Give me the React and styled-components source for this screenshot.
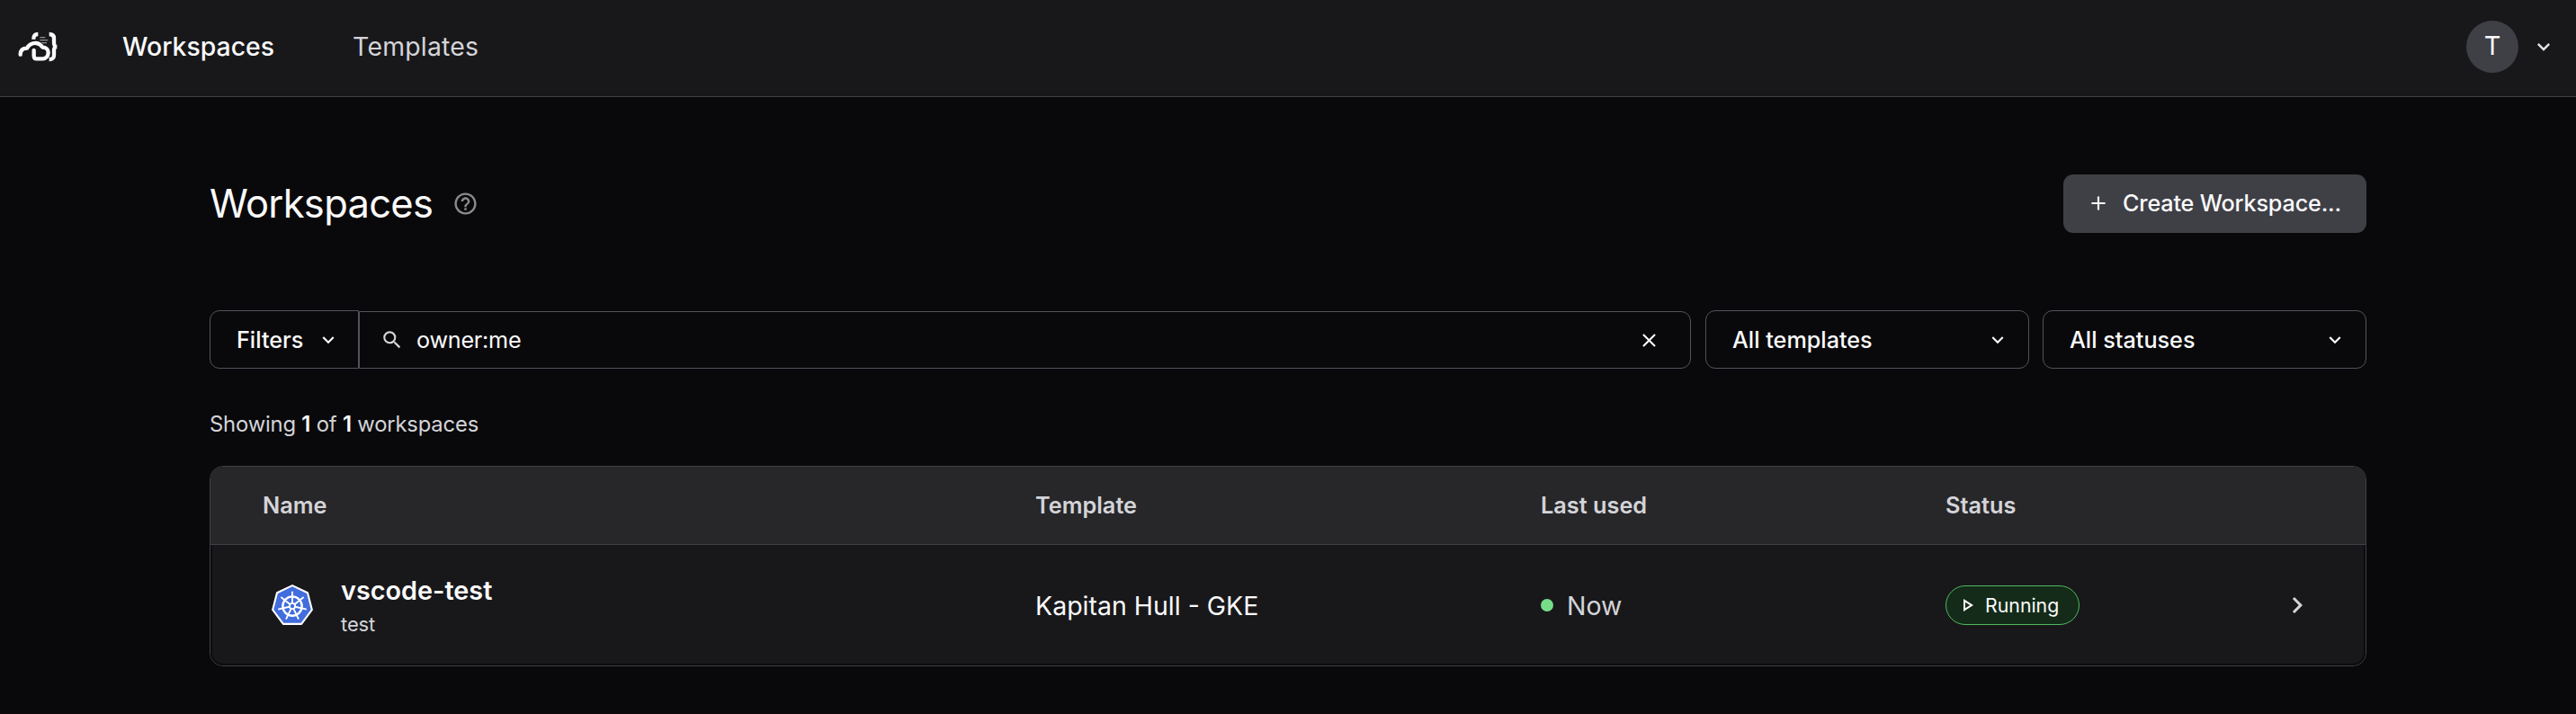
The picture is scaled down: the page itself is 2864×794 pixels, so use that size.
import React from "react";
import styled, { createGlobalStyle } from "styled-components";
import {
  MdKeyboardArrowDown,
  MdKeyboardArrowRight,
  MdHelpOutline,
  MdAdd,
  MdSearch,
  MdClose,
  MdOutlinePlayArrow,
} from "react-icons/md";

const GlobalStyle = createGlobalStyle`
  *, *::before, *::after { box-sizing: border-box; }
  body {
    margin: 0;
    background: #09090b;
    color: #fafafa;
    font-family: Inter, "Liberation Sans", sans-serif;
    -webkit-font-smoothing: antialiased;
  }
  button { font: inherit; color: inherit; }
  svg { display: block; flex: none; }
`;

const Page = styled.div`
  min-height: 794px;
`;

const Navbar = styled.header`
  height: 108px;
  display: flex;
  align-items: center;
  padding: 0 22px 4px 20px;
  background: #18181b;
  border-bottom: 1px solid #3f3f46;
`;

const LogoMark = styled.svg`
  width: 46px;
  height: 36px;
  margin-top: 3px;
`;

const Nav = styled.nav`
  display: flex;
  gap: 87px;
  margin-left: 70px;
  flex: 1;
`;

const NavLink = styled.a`
  font-size: 28.4px;
  line-height: 40px;
  letter-spacing: ${(p) => (p.$active ? "0" : "0.2px")};
  font-weight: ${(p) => (p.$active ? 500 : 400)};
  color: ${(p) => (p.$active ? "#fafafa" : "#d4d4d8")};
`;

const UserMenu = styled.div`
  display: flex;
  align-items: center;
  gap: 14px;
  color: #e4e4e7;
`;

const Avatar = styled.span`
  width: 58px;
  height: 58px;
  border-radius: 50%;
  display: flex;
  align-items: center;
  justify-content: center;
  background: #3f3f46;
  color: #fafafa;
  font-size: 28.8px;
  padding-bottom: 2px;
`;

const Main = styled.main`
  width: 2398px;
  margin: 0 auto;
  padding-top: 86px;
`;

const PageHeader = styled.div`
  height: 65px;
  display: flex;
  align-items: center;
  justify-content: space-between;
`;

const TitleGroup = styled.div`
  display: flex;
  align-items: center;
  gap: 22px;
  color: #8b8b8e;
`;

const Title = styled.h1`
  margin: 0;
  padding-bottom: 2px;
  font-size: 43.5px;
  line-height: 56px;
  letter-spacing: -0.7px;
  font-weight: 400;
  color: #fafafa;
`;

const PrimaryButton = styled.button`
  width: 337px;
  height: 65px;
  display: flex;
  align-items: center;
  gap: 14px;
  padding: 0 0 1px 26px;
  border: 0;
  border-radius: 11px;
  background: #3f3f46;
  font-size: 25.2px;
  letter-spacing: -0.17px;
  font-weight: 500;
  white-space: nowrap;
`;

const FilterBar = styled.div`
  display: flex;
  align-items: flex-end;
  margin-top: 86px;
`;

const OutlinedButton = styled.button`
  width: ${(p) => p.$width};
  height: 65px;
  margin-left: ${(p) => p.$gap || "0"};
  padding: 0 ${(p) => p.$right} 0 29px;
  display: flex;
  align-items: center;
  justify-content: space-between;
  border: 1px solid #52525b;
  border-radius: ${(p) => (p.$joined ? "11px 0 0 11px" : "11px")};
  background: transparent;
  font-size: 25.2px;
  font-weight: 500;
`;

const SearchField = styled.div`
  width: 1481px;
  height: 64px;
  display: flex;
  align-items: center;
  padding: 0 33px 0 23px;
  border: 1px solid #52525b;
  border-radius: 0 11px 11px 0;
  color: #d4d4d8;
`;

const SearchText = styled.span`
  flex: 1;
  margin-left: 14px;
  font-size: 25.2px;
  letter-spacing: -0.25px;
  color: #fafafa;
`;

const Summary = styled.p`
  margin: 46px 0 0;
  height: 32px;
  font-size: 23.8px;
  line-height: 32px;
  letter-spacing: -0.18px;
  color: #d4d4d8;

  strong {
    font-weight: 600;
    color: #fafafa;
  }
`;

const Table = styled.section`
  margin-top: 30px;
  border: 1px solid #3f3f46;
  border-radius: 15px;
  overflow: hidden;
`;

const columns = `
  display: grid;
  grid-template-columns: 859px 562px 450px 1fr;
  align-items: center;
`;

const TableHead = styled.div`
  ${columns}
  height: 87px;
  padding: 0 0 1px 58px;
  background: #27272a;
  border-bottom: 1px solid #3f3f46;
  font-size: 25.3px;
  font-weight: 600;
  color: #d4d4d8;
`;

const TableRow = styled.div`
  ${columns}
  height: 134px;
  padding: 2px 0 0 56px;
  background: #18181b;
  border: 2px solid #0c0c0e;
  border-top: 0;
  border-radius: 0 0 14px 14px;
  font-size: 28.5px;
`;

const NameCell = styled.div`
  display: flex;
  align-items: center;
  padding-left: 9px;
  gap: 30px;
`;

const WorkspaceName = styled.div`
  font-size: 28.8px;
  line-height: 42px;
  font-weight: 600;
`;

const Owner = styled.div`
  font-size: 22px;
  line-height: 32px;
  letter-spacing: -0.1px;
  color: #d4d4d8;
`;

const LastUsed = styled.div`
  display: flex;
  align-items: center;
  gap: 15px;
  color: #d4d4d8;
`;

const Dot = styled.span`
  width: 14px;
  height: 14px;
  border-radius: 50%;
  background: #77dd88;
`;

const StatusCell = styled.div`
  display: flex;
  align-items: center;
  justify-content: space-between;
  padding-right: 56px;
  color: #d4d4d8;
`;

const StatusPill = styled.span`
  width: 149px;
  height: 44px;
  display: flex;
  align-items: center;
  gap: 8px;
  padding-left: 11px;
  border: 1px solid #4fb85e;
  border-radius: 22px;
  background: #142b19;
  color: #fafafa;
  font-size: 21.3px;
`;

function Logo() {
  return (
    <LogoMark viewBox="30 33 138 108" fill="none" strokeWidth="13">
      <g stroke="#fafafa">
        <path d="M97 42c-10 0-15 4-15 17" />
        <path
          d="M38 110c0-14 7-21 22-21 8-14 19-18 31-17 11 1 16 6 21 14 12 0 19 7 19 17 0 11-7 21-18 21H92c-7 0-9-4-9-10V96"
          strokeLinecap="round"
          strokeLinejoin="round"
        />
        <path d="M134 42c12 0 16 5 16 14v14c0 9 2 14 10 14-8 0-10 5-10 14v14c0 10-4 14-16 14" strokeLinejoin="bevel" />
      </g>
      <path d="M103 53h18M103 62h27M109 71h17" stroke="#929295" strokeWidth="4" />
    </LogoMark>
  );
}

/* Heptagonal badge with a seven-spoke ship's wheel. */
function KubernetesIcon() {
  const spokes = Array.from({ length: 7 }, (_, i) => (i * 360) / 7);
  return (
    <svg width="48" height="48" viewBox="0 0 46 46" fill="none">
      <path
        d="M23 2 39.3 9.8 43.9 27.9 32.7 43H13.3L2.1 27.9 6.7 9.8Z"
        fill="#416ddd"
        stroke="#fff"
        strokeWidth="2"
        strokeLinejoin="round"
      />
      <g stroke="#fff" transform="translate(23 24)">
        <circle r="10.2" strokeWidth="2.3" />
        {spokes.map((a) => (
          <path key={a} d="M0-3.2V-15.5" strokeWidth="1.8" transform={`rotate(${a})`} />
        ))}
        <circle r="3" strokeWidth="1.8" />
      </g>
    </svg>
  );
}

export default function App() {
  return (
    <Page>
      <GlobalStyle />
      <Navbar>
        <Logo />
        <Nav>
          <NavLink $active>Workspaces</NavLink>
          <NavLink>Templates</NavLink>
        </Nav>
        <UserMenu>
          <Avatar>T</Avatar>
          <MdKeyboardArrowDown size={28} />
        </UserMenu>
      </Navbar>
      <Main>
        <PageHeader>
          <TitleGroup>
            <Title>Workspaces</Title>
            <MdHelpOutline size={29} />
          </TitleGroup>
          <PrimaryButton>
            <MdAdd size={26} />
            Create Workspace...
          </PrimaryButton>
        </PageHeader>
        <FilterBar>
          <OutlinedButton $joined $width="166px" $right="20px">
            Filters
            <MdKeyboardArrowDown size={26} />
          </OutlinedButton>
          <SearchField>
            <MdSearch size={26} />
            <SearchText>owner:me</SearchText>
            <MdClose size={25} color="#fafafa" />
          </SearchField>
          <OutlinedButton $width="360px" $right="21px" $gap="16px">
            All templates
            <MdKeyboardArrowDown size={26} />
          </OutlinedButton>
          <OutlinedButton $width="360px" $right="21px" $gap="15px">
            All statuses
            <MdKeyboardArrowDown size={26} />
          </OutlinedButton>
        </FilterBar>
        <Summary>
          Showing <strong>1</strong> of <strong>1</strong> workspaces
        </Summary>
        <Table>
          <TableHead>
            <span>Name</span>
            <span>Template</span>
            <span>Last used</span>
            <span>Status</span>
          </TableHead>
          <TableRow>
            <NameCell>
              <KubernetesIcon />
              <div>
                <WorkspaceName>vscode-test</WorkspaceName>
                <Owner>test</Owner>
              </div>
            </NameCell>
            <span>Kapitan Hull - GKE</span>
            <LastUsed>
              <Dot />
              Now
            </LastUsed>
            <StatusCell>
              <StatusPill>
                <MdOutlinePlayArrow size={24} />
                Running
              </StatusPill>
              <MdKeyboardArrowRight size={36} />
            </StatusCell>
          </TableRow>
        </Table>
      </Main>
    </Page>
  );
}
